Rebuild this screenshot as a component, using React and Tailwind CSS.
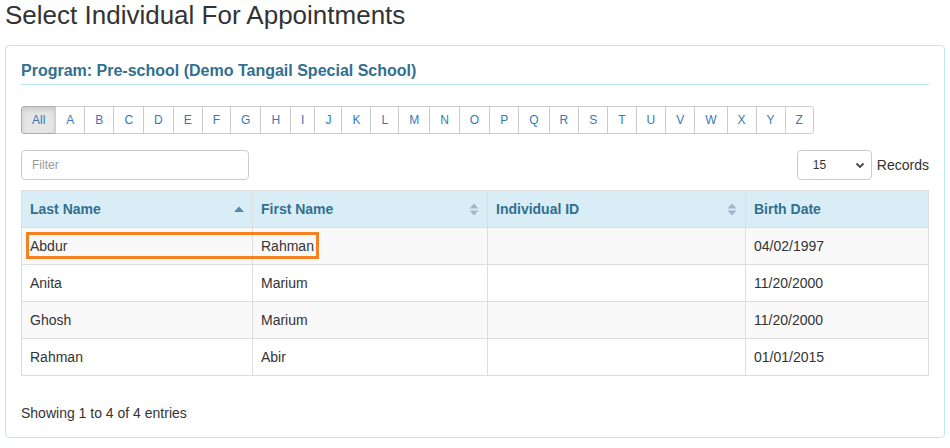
const letters = "ABCDEFGHIJKLMNOPQRSTUVWXYZ".split("");

const rows = [
  { last: "Abdur", first: "Rahman", id: "", birth: "04/02/1997" },
  { last: "Anita", first: "Marium", id: "", birth: "11/20/2000" },
  { last: "Ghosh", first: "Marium", id: "", birth: "11/20/2000" },
  { last: "Rahman", first: "Abir", id: "", birth: "01/01/2015" },
];

function SortUp() {
  return (
    <svg width="10" height="6" viewBox="0 0 10 6">
      <path d="M0 6 L5 0.5 L10 6 Z" fill="#5b87a6" />
    </svg>
  );
}

function SortBoth() {
  return (
    <svg width="10" height="13" viewBox="0 0 10 13">
      <path d="M0.5 5.5 L5 0.5 L9.5 5.5 Z" fill="#9fb8c9" />
      <path d="M0.5 7.5 L5 12.5 L9.5 7.5 Z" fill="#9fb8c9" />
    </svg>
  );
}

export default function App() {
  return (
    <div className="bg-white pl-[5px] w-[950px] h-[448px] text-[14px] text-[#333] font-['Liberation_Sans',Arial,sans-serif]">
      <h1 className="text-[26px] leading-[30px] font-normal text-[#333]">
        Select Individual For Appointments
      </h1>

      <div className="mt-[15px] w-[940px] border border-[#bce8f1] rounded-[4px] px-[15px] pt-[15px] pb-[14px]">
        {/* Heading */}
        <div className="border-b border-[#bce8f1] pb-[3px]">
          <h3 className="text-[16px] leading-[20px] font-bold text-[#31708f]">
            Program: Pre-school (Demo Tangail Special School)
          </h3>
        </div>

        {/* Alphabet */}
        <div className="flex mt-[21px]">
          <button className="h-[28px] px-[10px] text-[12px] leading-[16px] text-[#337ab7] bg-[#e6e6e6] border border-[#adadad] rounded-l-[3px] shadow-[inset_0_3px_5px_rgba(0,0,0,0.125)]">
            All
          </button>
          {letters.map((l, i) => (
            <button
              key={l}
              className={
                "h-[28px] px-[10px] -ml-px text-[12px] leading-[16px] text-[#337ab7] bg-white border border-[#ccc] " +
                (i === letters.length - 1 ? "rounded-r-[3px]" : "")
              }
            >
              {l}
            </button>
          ))}
        </div>

        {/* Filter + records */}
        <div className="flex items-center justify-between mt-[16px]">
          <div className="w-[228px] h-[30px] border border-[#ccc] rounded-[4px] px-[10px] flex items-center text-[12px] text-[#999]">
            Filter
          </div>
          <div className="flex items-center gap-[5px]">
            <div className="w-[75px] h-[30px] border border-[#ccc] rounded-[4px] flex items-center justify-between pl-[15px] pr-[6px] text-[12px] text-[#333]">
              <span>15</span>
              <svg width="10" height="7" viewBox="0 0 10 7">
                <path d="M1.5 1.5 L5 5 L8.5 1.5" fill="none" stroke="#444" strokeWidth="1.8" />
              </svg>
            </div>
            <span className="text-[14px]">Records</span>
          </div>
        </div>

        {/* Table */}
        <div className="relative mt-[10px]">
          <table className="w-[907px] table-fixed border-collapse border border-[#ddd]">
            <colgroup>
              <col className="w-[231px]" />
              <col className="w-[235px]" />
              <col className="w-[258px]" />
              <col className="w-[183px]" />
            </colgroup>
            <thead>
              <tr className="bg-[#d9edf7] text-[#31708f]">
                <th className="border border-[#ddd] px-[8px] py-[8px] h-[37px] text-left font-bold leading-[20px]">
                  <div className="flex items-center justify-between">
                    <span>Last Name</span>
                    <SortUp />
                  </div>
                </th>
                <th className="border border-[#ddd] px-[8px] py-[8px] text-left font-bold leading-[20px]">
                  <div className="flex items-center justify-between">
                    <span>First Name</span>
                    <SortBoth />
                  </div>
                </th>
                <th className="border border-[#ddd] px-[8px] py-[8px] text-left font-bold leading-[20px]">
                  <div className="flex items-center justify-between">
                    <span>Individual ID</span>
                    <SortBoth />
                  </div>
                </th>
                <th className="border border-[#ddd] px-[8px] py-[8px] text-left font-bold leading-[20px]">
                  Birth Date
                </th>
              </tr>
            </thead>
            <tbody>
              {rows.map((r, i) => (
                <tr key={i} className={i % 2 === 0 ? "bg-[#f9f9f9]" : "bg-white"}>
                  <td className="border border-[#ddd] px-[8px] py-[8px] h-[37px] leading-[20px]">{r.last}</td>
                  <td className="border border-[#ddd] px-[8px] py-[8px] leading-[20px]">{r.first}</td>
                  <td className="border border-[#ddd] px-[8px] py-[8px] leading-[20px]">{r.id}</td>
                  <td className="border border-[#ddd] px-[8px] py-[8px] leading-[20px]">{r.birth}</td>
                </tr>
              ))}
            </tbody>
          </table>

          {/* highlight annotation */}
          <div className="absolute left-[5px] top-[42px] w-[293px] h-[27px] border-[3px] border-[#f5821f] pointer-events-none" />
        </div>

        <div className="mt-[27px] text-[14px] leading-[20px]">Showing 1 to 4 of 4 entries</div>
      </div>
    </div>
  );
}
